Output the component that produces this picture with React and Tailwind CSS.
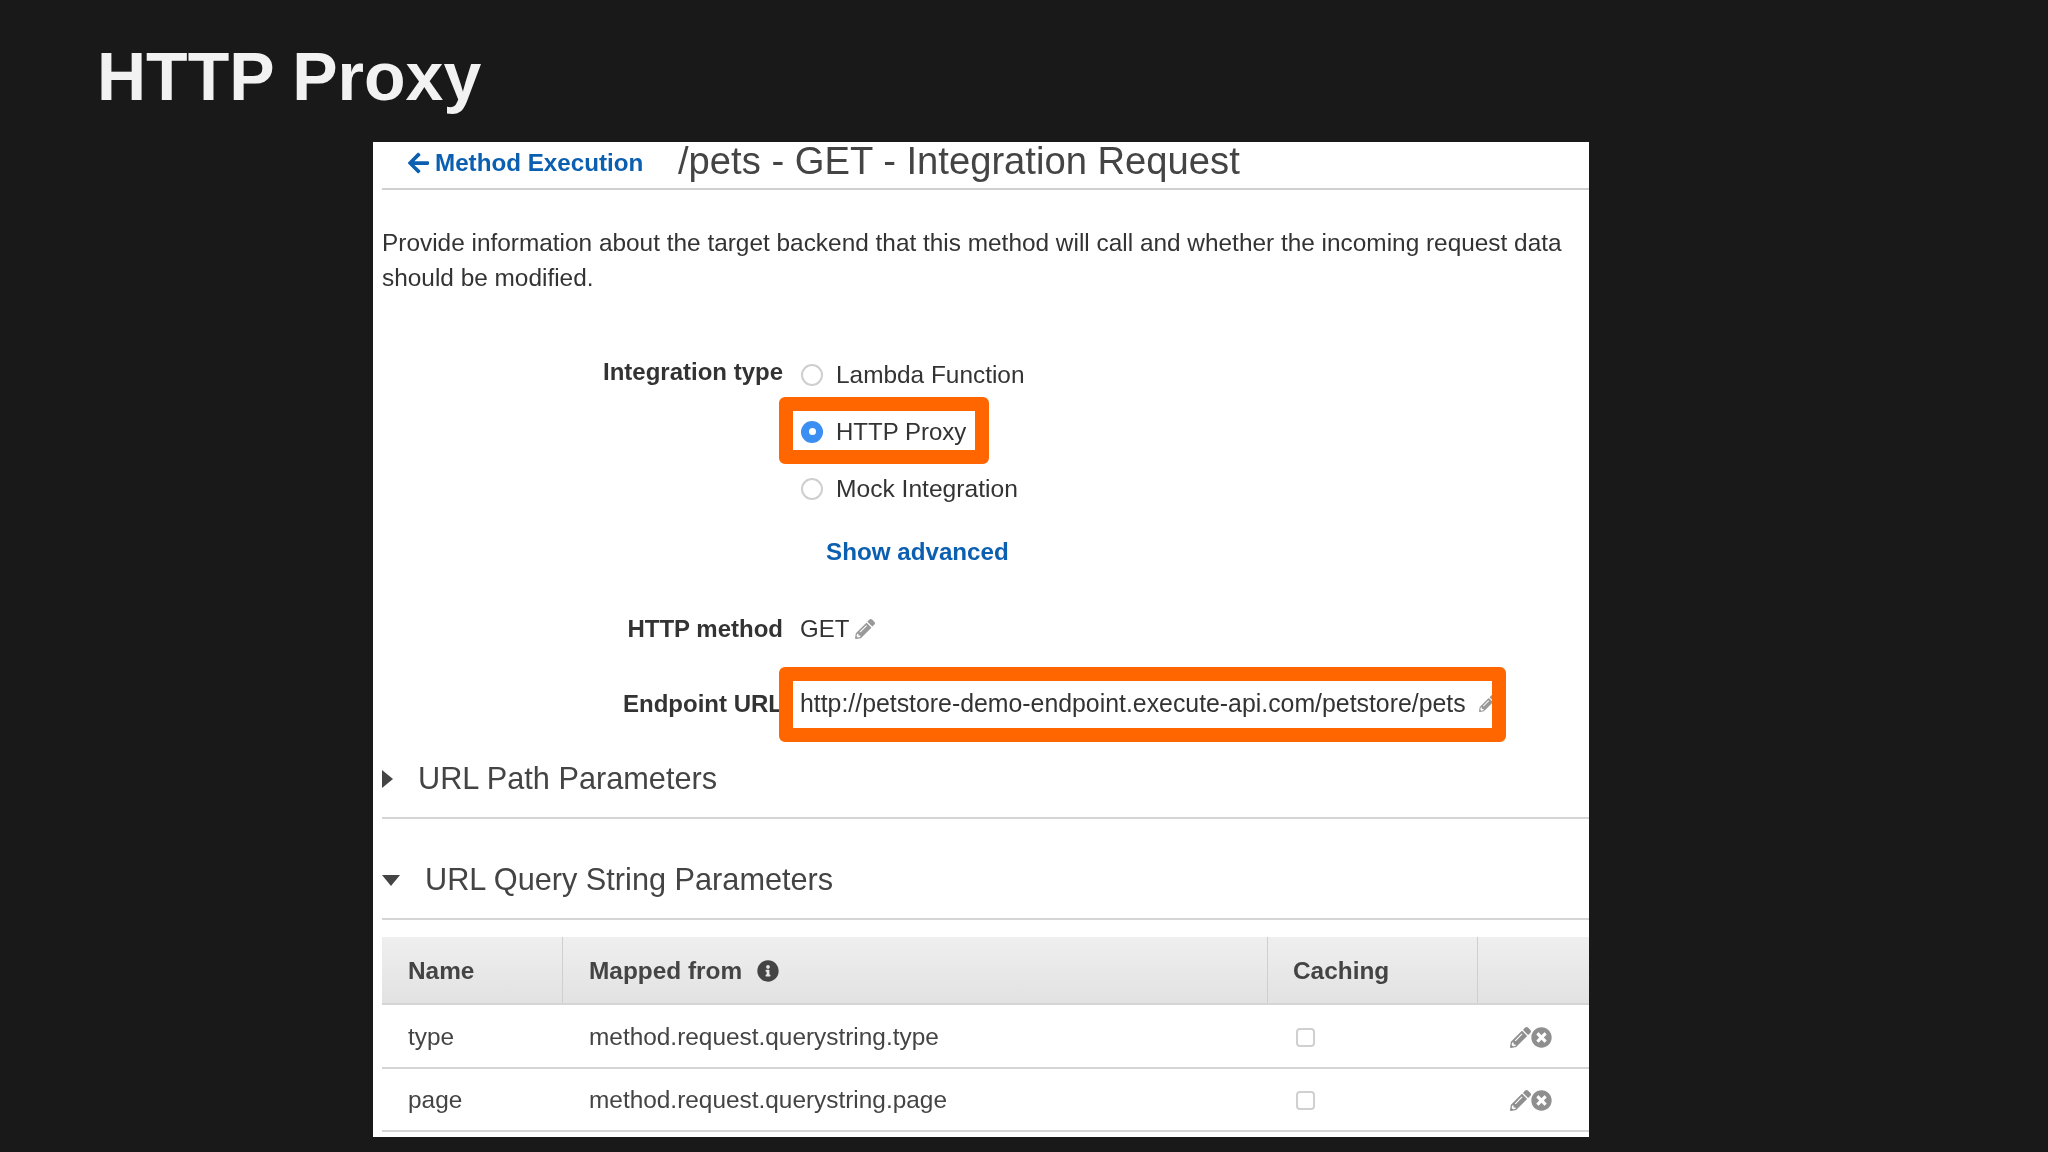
import React from 'react'
import { FaArrowLeft, FaInfoCircle, FaPencilAlt, FaTimesCircle } from 'react-icons/fa'

const Radio = ({ checked }) =>
  checked ? (
    <span className="flex h-[22px] w-[22px] shrink-0 items-center justify-center rounded-full bg-[#3b8ff3]">
      <span className="h-[7px] w-[7px] rounded-full bg-white"></span>
    </span>
  ) : (
    <span className="h-[22px] w-[22px] shrink-0 rounded-full border-2 border-[#cfcfcf] bg-white"></span>
  )

const Label = ({ children, className }) => (
  <div className={`w-[401px] shrink-0 text-right text-[24px] font-bold text-[#333] ${className}`}>{children}</div>
)

const ParamRow = ({ name, mapped }) => (
  <div className="flex h-[63.5px] items-center border-b-2 border-[#d5d5d5] pt-[2px] text-[24.4px] text-[#444]">
    <div className="w-[180px] pl-[26px]">{name}</div>
    <div className="w-[705px] pl-[27px]">{mapped}</div>
    <div className="w-[210px] pl-[29px]">
      <div className="h-[19px] w-[19px] rounded-[4px] border-2 border-[#d0d0d0] bg-white"></div>
    </div>
    <div className="flex items-center pl-[33px] text-[#8f8f8f]">
      <FaPencilAlt className="h-[21px] w-[21px]" />
      <FaTimesCircle className="h-[21px] w-[21px]" />
    </div>
  </div>
)

export default function App() {
  return (
    <div className="h-[1152px] overflow-hidden bg-[#191919] font-['Liberation_Sans',sans-serif] blur-[0.4px]">
      <h1 className="h-[142px] pl-[97px] pt-[36px] text-[68px] leading-[80px] font-bold text-[#f2f2f2]">HTTP Proxy</h1>

      <div className="ml-[373px] h-[995px] w-[1216px] bg-white pl-[9px]">
        {/* Header */}
        <div className="flex h-[48px] items-center border-b-2 border-[#d0d0d0]">
          <a className="ml-[26px] flex w-[270px] items-center pb-[4px] text-[24.2px] font-bold text-[#0b5fb0]">
            <FaArrowLeft className="mr-[6px] h-[24px] w-[21px]" />
            Method Execution
          </a>
          <h2 className="pb-[8px] text-[38.2px] text-[#444]">/pets - GET - Integration Request</h2>
        </div>

        <p className="mt-[35px] text-[24.4px] leading-[35px] text-[#333]">
          Provide information about the target backend that this method will call and whether the incoming request data should be modified.
        </p>

        {/* Integration type */}
        <div className="mt-[65px] flex h-[30px] items-center">
          <Label className="pb-[6px]">Integration type</Label>
          <div className="ml-[18px] flex items-center text-[24.4px] text-[#333]">
            <Radio />
            <span className="ml-[13px]">Lambda Function</span>
          </div>
        </div>
        <div className="mt-[7px] flex">
          <div className="w-[419px] shrink-0"></div>
          <div className="relative -ml-[22px] flex h-[67px] w-[210px] items-center rounded-[6px] border-[14px] border-[#ff6600] pl-[8px] pt-[2px] text-[24px] text-[#333]">
            <Radio checked />
            <span className="ml-[13px]">HTTP Proxy</span>
          </div>
        </div>
        <div className="mt-[10px] flex h-[30px] items-center">
          <div className="w-[419px] shrink-0"></div>
          <div className="flex items-center text-[24.6px] text-[#333]">
            <Radio />
            <span className="ml-[13px]">Mock Integration</span>
          </div>
        </div>
        <div className="mt-[30px] pl-[444px] text-[24.2px] font-bold text-[#0b5fb0]">Show advanced</div>

        {/* HTTP method */}
        <div className="mt-[44px] flex h-[30px] items-center">
          <Label>HTTP method</Label>
          <div className="ml-[17px] flex items-center text-[24px] text-[#333]">
            GET
            <FaPencilAlt className="ml-[6px] h-[20px] w-[20px] text-[#999]" />
          </div>
        </div>

        {/* Endpoint URL */}
        <div className="mt-[23px] flex items-center">
          <Label className="pb-[2px]">Endpoint URL</Label>
          <div className="relative ml-[-4px] flex h-[75px] w-[727px] items-center overflow-hidden whitespace-nowrap rounded-[6px] border-[14px] border-[#ff6600] pb-[3px] pl-[7px] text-[24.85px] text-[#333]">
            http://petstore-demo-endpoint.execute-api.com/petstore/pets
            <FaPencilAlt className="ml-[13px] h-[17px] w-[17px] shrink-0 text-[#999]" />
          </div>
        </div>

        {/* URL Path Parameters */}
        <div className="mt-[13px] flex h-[64px] items-center border-b-2 border-[#d5d5d5] pb-[14px]">
          <svg className="h-[18px] w-[11px] shrink-0" viewBox="0 0 11 18"><path d="M0 0 L11 9 L0 18 Z" fill="#444" /></svg>
          <span className="ml-[25px] text-[30.7px] text-[#444]">URL Path Parameters</span>
        </div>

        {/* URL Query String Parameters */}
        <div className="mt-[36px] flex h-[65px] items-center border-b-2 border-[#d5d5d5] pb-[13px]">
          <svg className="h-[11px] w-[18px] shrink-0" viewBox="0 0 18 11"><path d="M0 0 L18 0 L9 11 Z" fill="#444" /></svg>
          <span className="ml-[25px] text-[30.7px] text-[#444]">URL Query String Parameters</span>
        </div>

        {/* Table */}
        <div className="mt-[17px]">
          <div className="flex h-[68px] items-stretch border-b-2 border-[#d5d5d5] bg-gradient-to-b from-[#efefef] to-[#e2e2e2] text-[24.4px] font-bold text-[#444]">
            <div className="flex w-[181px] items-center border-r border-[#cfcfcf] pl-[26px] pt-[2px]">Name</div>
            <div className="flex w-[705px] items-center border-r border-[#cfcfcf] pl-[26px] pt-[2px]">
              Mapped from
              <FaInfoCircle className="ml-[15px] h-[22px] w-[22px]" />
            </div>
            <div className="flex w-[210px] items-center border-r border-[#cfcfcf] pl-[25px] pt-[2px]">Caching</div>
            <div className="flex-1"></div>
          </div>
          <ParamRow name="type" mapped="method.request.querystring.type" />
          <ParamRow name="page" mapped="method.request.querystring.page" />
        </div>
      </div>
    </div>
  )
}
